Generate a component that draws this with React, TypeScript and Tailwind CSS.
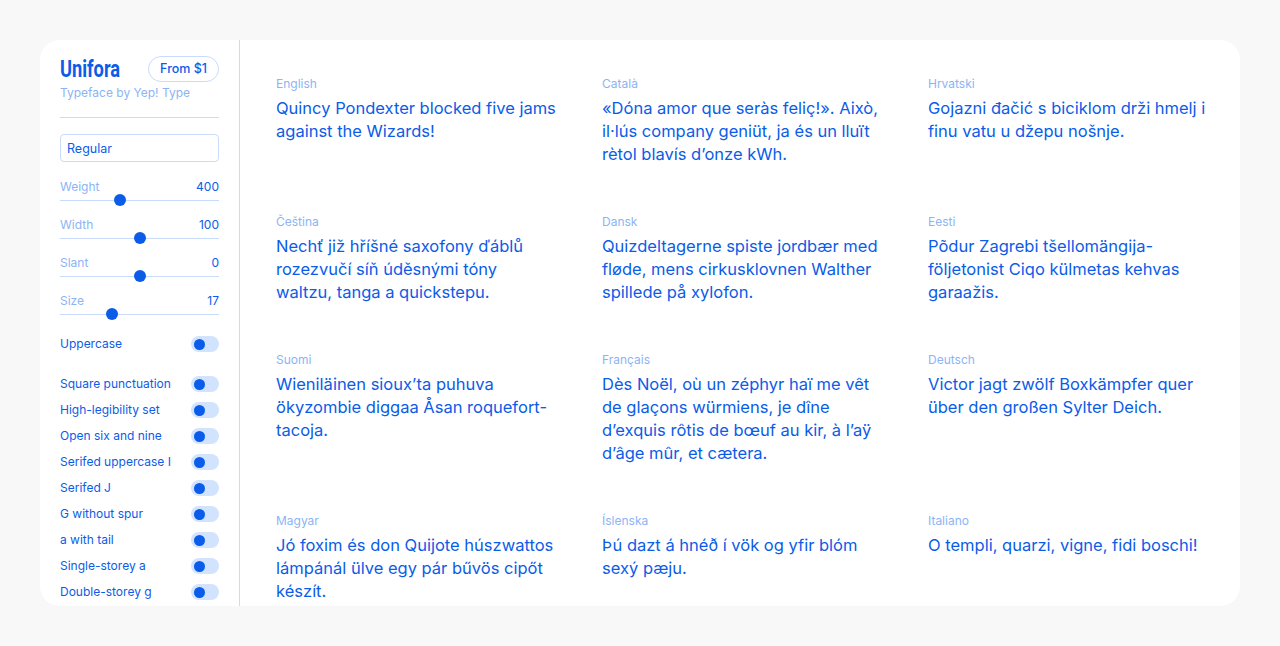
const samples = [
  { lang: 'English', text: 'Quincy Pondexter blocked five jams against the Wizards!' },
  { lang: 'Català', text: '«Dóna amor que seràs feliç!». Això, il·lús company geniüt, ja és un lluït rètol blavís d’onze kWh.' },
  { lang: 'Hrvatski', text: 'Gojazni đačić s biciklom drži hmelj i finu vatu u džepu nošnje.' },
  { lang: 'Čeština', text: 'Nechť již hříšné saxofony ďáblů rozezvučí síň úděsnými tóny waltzu, tanga a quickstepu.' },
  { lang: 'Dansk', text: 'Quizdeltagerne spiste jordbær med fløde, mens cirkusklovnen Walther spillede på xylofon.' },
  { lang: 'Eesti', text: 'Põdur Zagrebi tšellomängija-följetonist Ciqo külmetas kehvas garaažis.' },
  { lang: 'Suomi', text: 'Wieniläinen sioux’ta puhuva ökyzombie diggaa Åsan roquefort-tacoja.' },
  { lang: 'Français', text: 'Dès Noël, où un zéphyr haï me vêt de glaçons würmiens, je dîne d’exquis rôtis de bœuf au kir, à l’aÿ d’âge mûr, et cætera.' },
  { lang: 'Deutsch', text: 'Victor jagt zwölf Boxkämpfer quer über den großen Sylter Deich.' },
  { lang: 'Magyar', text: 'Jó foxim és don Quijote húszwattos lámpánál ülve egy pár bűvös cipőt készít.' },
  { lang: 'Íslenska', text: 'Þú dazt á hnéð í vök og yfir blóm sexý pæju.' },
  { lang: 'Italiano', text: 'O templi, quarzi, vigne, fidi boschi!' },
];

const sliders = [
  { label: 'Weight', value: '400', pos: 38 },
  { label: 'Width', value: '100', pos: 50 },
  { label: 'Slant', value: '0', pos: 50 },
  { label: 'Size', value: '17', pos: 33 },
];

const features = [
  'Square punctuation',
  'High-legibility set',
  'Open six and nine',
  'Serifed uppercase I',
  'Serifed J',
  'G without spur',
  'a with tail',
  'Single-storey a',
  'Double-storey g',
];

function Toggle() {
  return (
    <div className="w-[28px] h-[16px] rounded-full bg-[#d2e3fd] flex items-center pl-[3px] shrink-0">
      <div className="w-[11px] h-[11px] rounded-full bg-[#0b5ce8]" />
    </div>
  );
}

function Slider({ label, value, pos }: { label: string; value: string; pos: number }) {
  return (
    <div>
      <div className="flex justify-between text-[12px] leading-[16px] translate-y-px">
        <span className="text-[#8cb4f5]">{label}</span>
        <span className="text-[#0b5ce8]">{value}</span>
      </div>
      <div className="relative h-[12px] flex items-center">
        <div className="h-px w-full bg-[#c8dbfb]" />
        <div
          className="absolute top-0 w-[12px] h-[12px] -ml-[6px] rounded-full bg-[#0b5ce8]"
          style={{ left: `${pos}%` }}
        />
      </div>
    </div>
  );
}

export default function App() {
  return (
    <div
      className="min-h-[646px] bg-[#f8f8f8] p-10"
      style={{ fontFamily: 'Inter, Roboto, "Noto Sans", sans-serif' }}
    >
      <div className="h-[566px] bg-white rounded-[20px] overflow-hidden flex">
        {/* Sidebar */}
        <aside className="w-[200px] shrink-0 border-r border-[#c8dbfb] px-5 pt-4">
          <div className="flex items-center justify-between h-[26px]">
            <span
              className="inline-block origin-left scale-x-[0.76] text-[24px] leading-none font-bold text-[#0b5ce8]"
              style={{ fontFamily: 'Roboto, "Liberation Sans", sans-serif' }}
            >
              Unifora
            </span>
            <span className="h-[26px] px-[11px] rounded-full border border-[#c8dbfb] text-[12.5px] font-medium text-[#0b5ce8] flex items-center">
              From $1
            </span>
          </div>
          <div className="mt-[3px] text-[12px] leading-[16px] text-[#8cb4f5]">Typeface by Yep! Type</div>
          <div className="mt-[16px] h-px bg-[#c8dbfb]" />
          <div className="mt-4 h-[28px] rounded-[4px] border border-[#c8dbfb] px-[6px] flex items-center text-[12.5px] text-[#0b5ce8]">
            <span className="translate-y-px">Regular</span>
          </div>
          <div className="mt-4 flex flex-col gap-[10px]">
            {sliders.map((s) => (
              <Slider key={s.label} {...s} />
            ))}
          </div>
          <div className="mt-[15px] flex items-center justify-between text-[12px] text-[#0b5ce8]">
            <span>Uppercase</span>
            <Toggle />
          </div>
          <div className="mt-[23px] flex flex-col gap-[10px]">
            {features.map((f) => (
              <div key={f} className="flex items-center justify-between h-[16px] text-[12px] text-[#0b5ce8]">
                <span>{f}</span>
                <Toggle />
              </div>
            ))}
          </div>
        </aside>

        {/* Samples */}
        <main className="flex-1 pl-9 pt-[37px]">
          <div className="grid grid-cols-[281px_281px_281px] gap-x-[45px] gap-y-[49px]">
            {samples.map((s) => (
              <div key={s.lang}>
                <div className="text-[12px] leading-[14px] text-[#8cb4f5] mb-[6px]">{s.lang}</div>
                <p className="text-[16.5px] leading-[23px] text-[#0b5ce8]">{s.text}</p>
              </div>
            ))}
          </div>
        </main>
      </div>
    </div>
  );
}
